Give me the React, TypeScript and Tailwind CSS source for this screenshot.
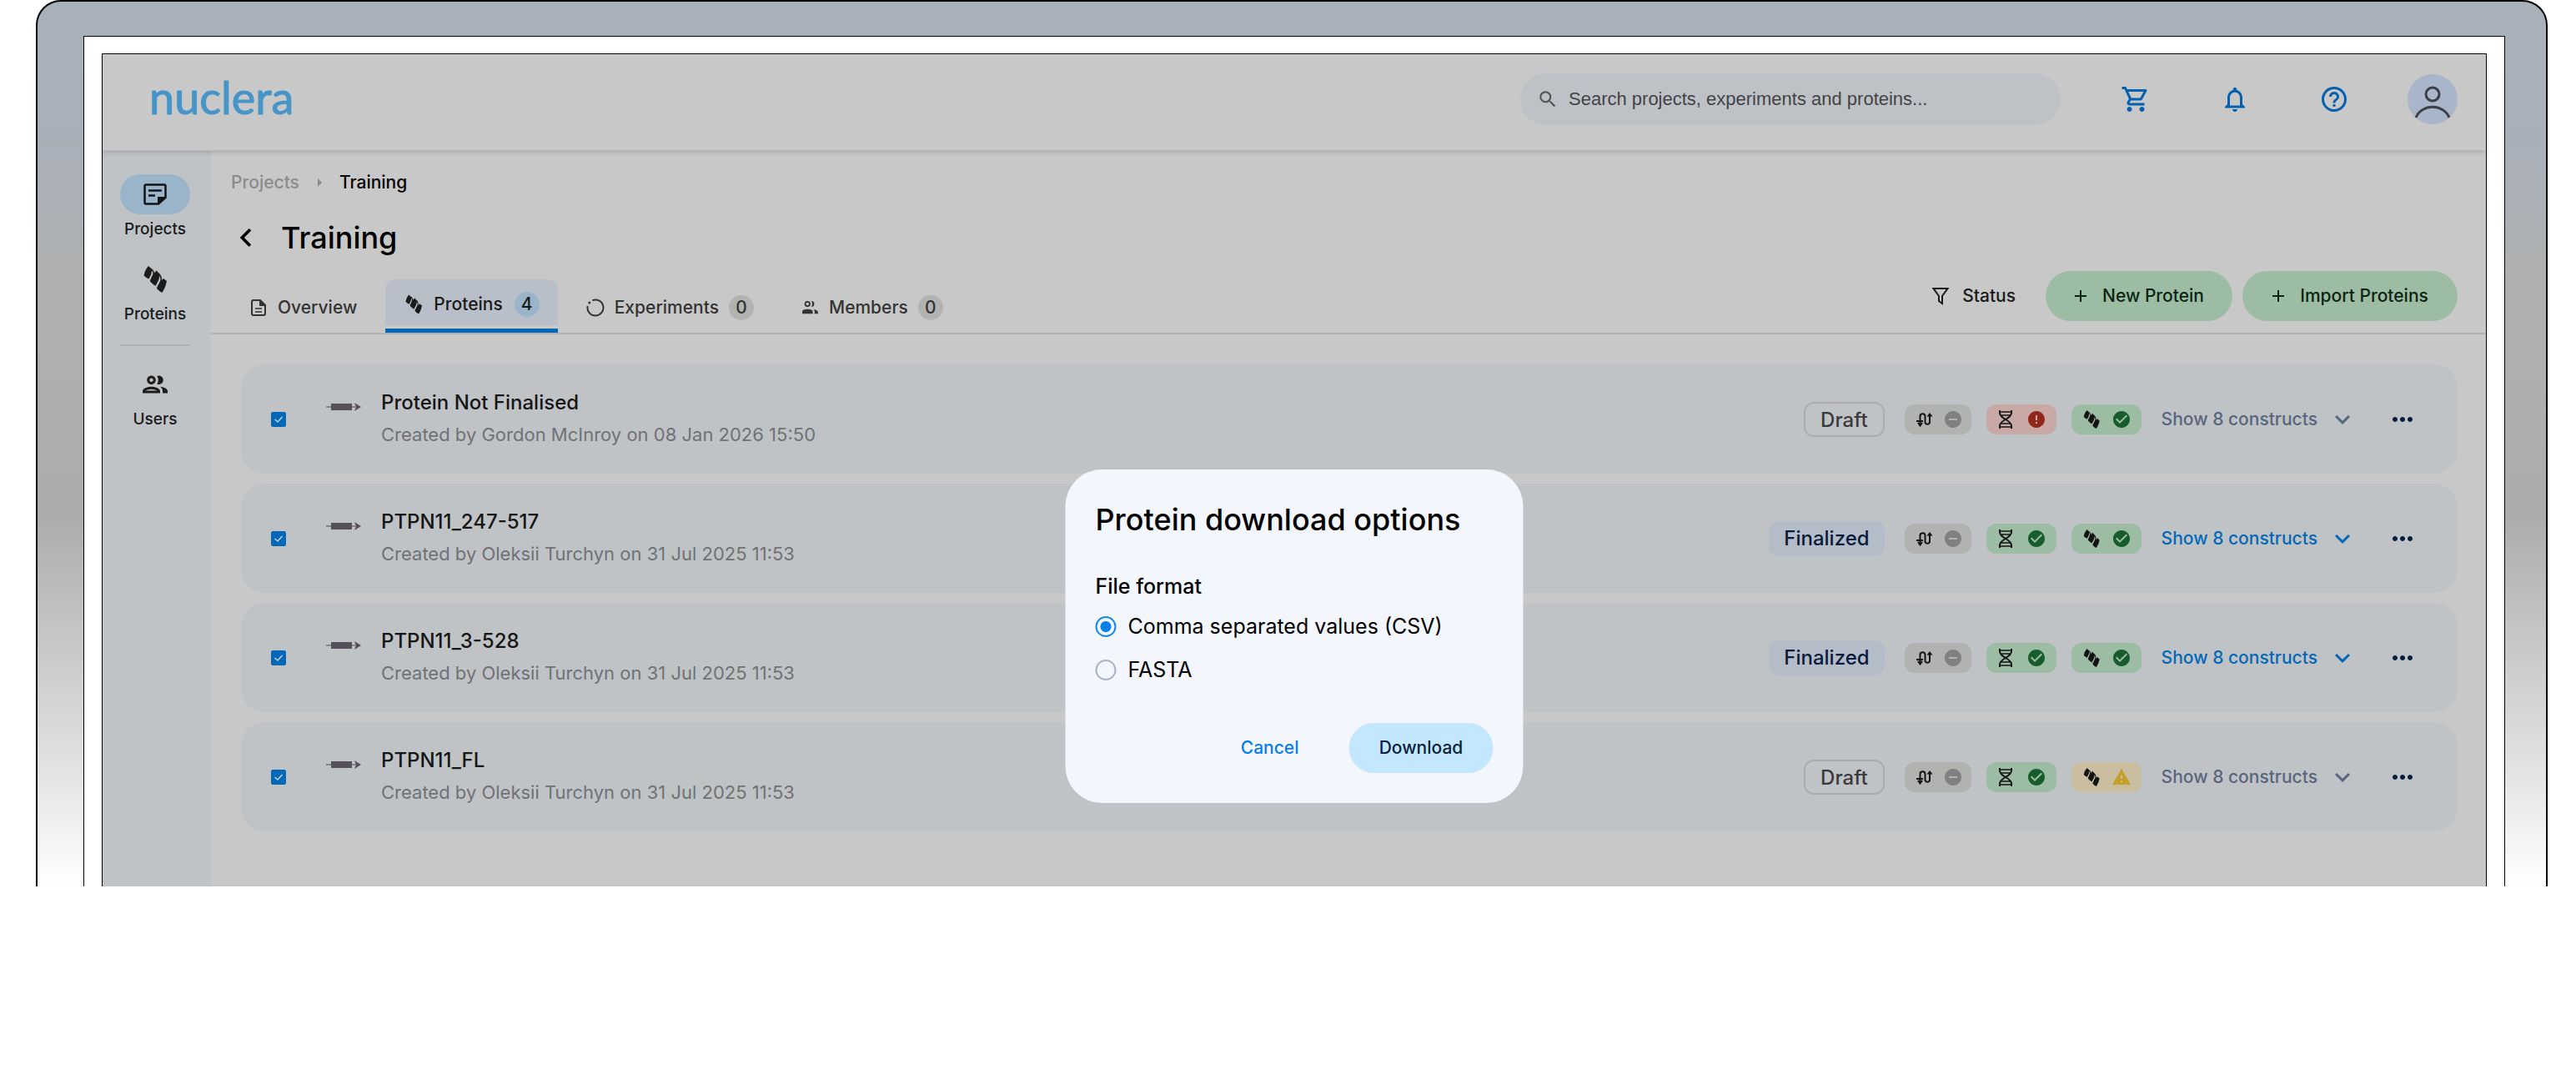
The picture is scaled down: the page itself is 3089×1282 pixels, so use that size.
import React, { useState } from "react";
import {
  MdChevronLeft,
  MdHelpOutline,
  MdKeyboardArrowDown,
  MdOutlineGroup,
  MdOutlineNotifications,
  MdOutlineShoppingCart,
  MdSearch,
  MdArrowRight,
  MdCheckCircle,
  MdError,
  MdRemoveCircle,
  MdWarning,
  MdAdd,
  MdMoreHoriz,
} from "react-icons/md";

type State = "none" | "ok" | "error" | "warning";

type Protein = {
  id: number;
  title: string;
  author: string;
  date: string;
  finalized: boolean;
  dna: State;
  protein: State;
};

const proteins: Protein[] = [
  {
    id: 1,
    title: "Protein Not Finalised",
    author: "Gordon McInroy",
    date: "08 Jan 2026 15:50",
    finalized: false,
    dna: "error",
    protein: "ok",
  },
  {
    id: 2,
    title: "PTPN11_247-517",
    author: "Oleksii Turchyn",
    date: "31 Jul 2025 11:53",
    finalized: true,
    dna: "ok",
    protein: "ok",
  },
  {
    id: 3,
    title: "PTPN11_3-528",
    author: "Oleksii Turchyn",
    date: "31 Jul 2025 11:53",
    finalized: true,
    dna: "ok",
    protein: "ok",
  },
  {
    id: 4,
    title: "PTPN11_FL",
    author: "Oleksii Turchyn",
    date: "31 Jul 2025 11:53",
    finalized: false,
    dna: "ok",
    protein: "warning",
  },
];

const stateStyles: Record<State, string> = {
  none: "w-20 pr-2.5 bg-[#b1b3b0]",
  ok: "w-21 pr-3 bg-[#9cbca4]",
  error: "w-21 pr-3 bg-[#c9a9a6]",
  warning: "w-21 pr-3 bg-[#c9be9f]",
};

const HelixIcon = ({ className }: { className?: string }) => (
  <svg viewBox="0 0 28 32" className={className} fill="currentColor">
    <path d="M6 0 10.500 4Q10 10 6.500 15.500L3.500 14 .5 11.500Q1.500 5 6 0Z" />
    <path d="M15.500 5.500 20 10Q19 17 14.500 24L11 21.500 8 18.500Q10 11 15.500 5.500Z" />
    <path d="M24 15 28 18Q27 25 22.500 32L19 30 16 27Q18 20 24 15Z" />
    <path
      d="M10 4Q13.500 8 11.500 12T8.500 18M19 10Q22.500 14 20.500 19T17 26.500"
      fill="none"
      stroke="currentColor"
      strokeWidth="1.500"
    />
  </svg>
);

const NoteIcon = () => (
  <svg viewBox="0 0 28 26" className="w-7 h-[26px]" fill="none" stroke="#141414">
    <path
      d="M3 1.5H25A1.5 1.5 0 0 1 26.500 3V17L18 24.500H3A1.500 1.500 0 0 1 1.500 23V3A1.500 1.500 0 0 1 3 1.500Z"
      strokeWidth="2.500"
    />
    <path d="M6 8.500H22M6 14.500H14" strokeWidth="2.500" />
    <path d="M17 25V16H27Z" fill="#141414" stroke="none" />
  </svg>
);

const DocIcon = () => (
  <svg viewBox="0 0 18 20" className="w-[18px] h-5" fill="none" stroke="#333">
    <path d="M3 1H11L17 7V17A2 2 0 0 1 15 19H3A2 2 0 0 1 1 17V3A2 2 0 0 1 3 1Z" strokeWidth="2" />
    <path d="M10.500 1V7.500H17Z" fill="#333" />
    <path d="M5 11H13M5 15H13" strokeWidth="1.500" />
  </svg>
);

const PlasmidIcon = () => (
  <svg viewBox="0 0 22 22" className="w-[22px] h-[22px]" fill="none" stroke="#333" strokeWidth="2">
    <path d="M7.500 2.200A9.500 9.500 0 1 1 1.700 9" />
    <circle cx="3.800" cy="5" r="1.500" fill="#333" stroke="none" />
  </svg>
);

const MembersIcon = () => (
  <svg viewBox="0 0 24 20" className="w-[22px] h-[18px]" fill="#333">
    <circle cx="9" cy="5" r="3" fill="none" stroke="#333" strokeWidth="2" />
    <path d="M14 1A4 4 0 0 1 14 9A7 7 0 0 0 14 1Z" />
    <path d="M2 18V15.500Q2 12 9 12T16 15.500V18Z" />
    <path d="M17 12.500Q23 13 23 16V18H18.500V15.500Q18.500 13.500 17 12.500Z" />
  </svg>
);

const FunnelIcon = () => (
  <svg viewBox="0 0 20 22" className="w-5 h-[22px]" fill="none" stroke="#1a1a1a" strokeWidth="2">
    <path d="M1.500 2H18.500L12 11V20L8 17V11Z" />
  </svg>
);

const ConstructIcon = () => (
  <svg viewBox="0 0 42 10" className="w-[42px] h-[10px]" fill="#555059">
    <path d="M0 4H6V6H0Z" fill="#85858a" />
    <path d="M6 1H31V9H6Z" />
    <path d="M31 4H36V6H31Z" fill="#85858a" />
    <path d="M34 0 42 5 34 10 36 5Z" />
  </svg>
);

const PathIcon = () => (
  <svg viewBox="0 0 20 18" className="w-5 h-[18px]" fill="none" stroke="#141414" strokeWidth="2">
    <path d="M4.500 15V5.500A3 3 0 0 1 10.500 5V13A3 3 0 0 0 16 13V4" />
    <path d="M0 11H8M2 13 4.500 16.500 7 13" />
    <path d="M12.500 5.500 16 1 19.500 5.500Z" fill="#141414" strokeWidth="0" />
  </svg>
);

const DnaIcon = () => (
  <svg viewBox="0 0 18 22" className="w-[18px] h-[22px]" fill="none" stroke="#141414" strokeWidth="2">
    <path d="M2 0V3C2 11 16 11 16 19V22M16 0V3C16 11 2 11 2 19V22" />
    <path d="M3 2H15M4 6H14M4 16H14M3 20H15" strokeWidth="1.500" />
  </svg>
);

const StateIcon = ({ state }: { state: State }) => {
  if (state === "ok") return <MdCheckCircle className="size-6 text-[#175c2c]" />;
  if (state === "error") return <MdError className="size-6 text-[#92281c]" />;
  if (state === "warning") return <MdWarning className="size-6 text-[#c79e26]" />;
  return <MdRemoveCircle className="size-6 text-[#7f8180]" />;
};

const StateBadge = ({ state, children }: { state: State; children: React.ReactNode }) => (
  <div className={`flex items-center justify-between h-9 pl-3.5 rounded-xl ${stateStyles[state]}`}>
    {children}
    <StateIcon state={state} />
  </div>
);

const Header = () => (
  <header className="relative flex items-center h-[116px] pl-14 pr-[34px] pb-2 border-b border-[#b8b8b8] shadow-[0_2px_5px_rgba(0,0,0,0.14)]">
    <a
      href="#"
      className="mb-1 font-['Lato',sans-serif] text-[54px] leading-none text-[#4794c8] [-webkit-text-stroke:1px_#4794c8]"
    >
      nuclera
    </a>
    <label className="flex items-center gap-3 ml-auto w-[648px] h-[62px] px-5 rounded-full bg-[#bec2c7]">
      <MdSearch className="size-[26px] text-[#555]" />
      <input
        type="text"
        aria-label="Search"
        placeholder="Search projects, experiments and proteins..."
        className="grow bg-transparent outline-none font-['Liberation_Sans',sans-serif] text-[22px] placeholder:text-[#444]"
      />
    </label>
    <div className="flex items-center gap-[83px] ml-[72px] text-[#0660b0]">
      <button aria-label="Cart">
        <MdOutlineShoppingCart className="size-9" />
      </button>
      <button aria-label="Notifications">
        <MdOutlineNotifications className="size-9" />
      </button>
      <button aria-label="Help">
        <MdHelpOutline className="size-9" />
      </button>
    </div>
    <button aria-label="Account" className="ml-[70px] size-15 rounded-full bg-[#a9b5ca] overflow-hidden">
      <svg viewBox="0 0 60 60" fill="none" stroke="#3c3f46" strokeWidth="3">
        <circle cx="30" cy="24" r="8" />
        <path d="M10 52C17 35 43 35 50 52" />
      </svg>
    </button>
  </header>
);

const Sidebar = () => (
  <nav className="flex flex-col items-center w-[130px] shrink-0 pt-7 pr-1 bg-[#bfc3c6] text-[19px] leading-6 font-medium text-[#1c1c1c]">
    <a href="#" className="flex flex-col items-center gap-1.5">
      <span className="flex items-center justify-center w-21 h-12 rounded-full bg-[#9ab5c9]">
        <NoteIcon />
      </span>
      Projects
    </a>
    <a href="#" className="flex flex-col items-center gap-3.5 mt-8">
      <HelixIcon className="w-7 h-8" />
      Proteins
    </a>
    <div className="w-21 h-0.5 mt-6 bg-[#b1b1b1]" />
    <a href="#" className="flex flex-col items-center gap-3 mt-7">
      <MdOutlineGroup className="size-9" />
      Users
    </a>
  </nav>
);

const ProteinRow = ({ item }: { item: Protein }) => {
  const [checked, setChecked] = useState(true);

  return (
    <li className="flex items-center h-[131px] pl-9 pr-12 rounded-[28px] bg-[#bfc3c6]">
      <span className="relative flex size-[18px]">
        <input
          type="checkbox"
          aria-label={item.title}
          checked={checked}
          onChange={() => setChecked(!checked)}
          className="appearance-none size-[18px] rounded-[2px] border border-[#0468b8] checked:bg-[#0468b8]"
        />
        {checked && (
          <svg
            viewBox="0 0 18 18"
            className="absolute inset-0 pointer-events-none"
            fill="none"
            stroke="#c0d4e4"
            strokeWidth="1.500"
          >
            <path d="M4.500 9 8 12 13.500 6" />
          </svg>
        )}
      </span>
      <div className="ml-12 mb-[30px]">
        <ConstructIcon />
      </div>
      <div className="ml-6 mb-1">
        <h2 className="text-[24px] leading-7 font-medium text-[#161616]">{item.title}</h2>
        <p className="mt-3 text-[22px] leading-6 text-[#707274]">
          Created by {item.author} on {item.date}
        </p>
      </div>
      <div className="flex items-center ml-auto">
        {item.finalized ? (
          <span className="px-[18px] h-[42px] leading-[42px] rounded-xl bg-[#b4bcc8] text-[24px] font-medium text-[#0a1a3c]">
            Finalized
          </span>
        ) : (
          <span className="px-[18px] h-[42px] leading-[40px] rounded-xl border-2 border-[#adadad] text-[24px] font-medium text-[#3a3a3a]">
            Draft
          </span>
        )}
        <div className="flex gap-[18px] ml-6">
          <StateBadge state="none">
            <PathIcon />
          </StateBadge>
          <StateBadge state={item.dna}>
            <DnaIcon />
          </StateBadge>
          <StateBadge state={item.protein}>
            <HelixIcon className="w-5 h-[22px] text-[#141414]" />
          </StateBadge>
        </div>
        <button
          className={
            item.finalized
              ? "flex items-center gap-3 ml-6 text-[21px] font-medium text-[#0468b8]"
              : "flex items-center gap-3 ml-6 text-[21px] font-medium text-[#59657c]"
          }
        >
          Show 8 constructs
          <MdKeyboardArrowDown className="size-9" />
        </button>
        <button aria-label="More" className="ml-9 text-[#071b40]">
          <MdMoreHoriz className="size-9" />
        </button>
      </div>
    </li>
  );
};

const Tabs = () => (
  <div className="flex items-end text-[21px] font-medium text-[#333]">
    <a href="#" className="flex items-center gap-3.5 h-15 pl-12 pr-[34px]">
      <DocIcon />
      Overview
    </a>
    <a
      href="#"
      className="flex items-center gap-3.5 h-16 pl-6 pr-[22px] rounded-t-xl border-b-5 border-[#0468b8] bg-[#b9bfc8] shadow-[inset_0_-4px_#c8c8c8] text-[#1a1a1a]"
    >
      <HelixIcon className="w-5 h-6" />
      Proteins
      <span className="size-[30px] leading-[30px] rounded-full bg-[#9ab5c9] text-center">4</span>
    </a>
    <a href="#" className="flex items-center gap-3 h-15 pl-[34px]">
      <PlasmidIcon />
      Experiments
      <span className="size-[30px] leading-[30px] rounded-full bg-[#b1b3b0] text-center">0</span>
    </a>
    <a href="#" className="flex items-center gap-3 h-15 pl-14">
      <MembersIcon />
      Members
      <span className="size-[30px] leading-[30px] rounded-full bg-[#b1b3b0] text-center">0</span>
    </a>
  </div>
);

const DownloadDialog = () => {
  const [format, setFormat] = useState("csv");

  const radioClass =
    "appearance-none size-[25px] rounded-full border-2 border-[#a9b4c6] checked:border-[#1787e6] checked:bg-[radial-gradient(circle,#0680e6_0_6px,transparent_7px)]";

  return (
    <div
      role="dialog"
      aria-label="Protein download options"
      className="absolute left-1/2 top-[498px] -translate-x-1/2 w-[549px] h-[400px] px-9 pt-9 rounded-[44px] bg-[#f3f6fd]"
    >
      <h2 className="text-[36px] leading-12 font-medium text-black">Protein download options</h2>
      <fieldset className="mt-10 text-[25px] leading-8">
        <legend className="font-medium">File format</legend>
        <label className="flex items-center gap-3.5 mt-4">
          <input
            type="radio"
            name="format"
            checked={format === "csv"}
            onChange={() => setFormat("csv")}
            className={radioClass}
          />
          Comma separated values (CSV)
        </label>
        <label className="flex items-center gap-3.5 mt-5">
          <input
            type="radio"
            name="format"
            checked={format === "fasta"}
            onChange={() => setFormat("fasta")}
            className={radioClass}
          />
          FASTA
        </label>
      </fieldset>
      <div className="flex justify-end mt-12 text-[21px] font-medium">
        <button className="h-15 px-9 mr-6 text-[#0680e6]">Cancel</button>
        <button className="h-15 w-[173px] rounded-full bg-[#c2e7ff] text-[#0a1f38]">Download</button>
      </div>
    </div>
  );
};

export default function App() {
  return (
    <div className="min-h-screen bg-white font-['Inter',sans-serif]">
      <div className="ml-[43px] mr-[34px] pl-[55px] pr-[49px] pt-[41px] rounded-t-[30px] border-2 border-b-0 border-black bg-[linear-gradient(#a8b1b9,#a8afba_15%,#aeb0b0_30%,#acacac_58%,#dfdfdf_85%,#fff)]">
        <div className="px-[21px] pt-5 border border-b-0 border-black bg-white">
          <div className="relative border border-b-0 border-black bg-[#c8c8c8]">
            <Header />
            <div className="flex">
              <Sidebar />
              <main className="grow min-h-[882px]">
                <div className="flex items-center pl-6 pt-6 text-[21px] leading-7 font-medium">
                  <a href="#" className="text-[#8b8b8b]">
                    Projects
                  </a>
                  <MdArrowRight className="size-6 mx-3 text-[#8b8b8b]" />
                  <span className="text-black">Training</span>
                </div>
                <div className="flex items-center gap-5 mt-7 pl-5">
                  <button aria-label="Back">
                    <MdChevronLeft className="size-11" />
                  </button>
                  <h1 className="text-[36px] leading-12 font-medium text-black">Training</h1>
                </div>
                <div className="flex items-end justify-between pr-[34px] border-b-2 border-[#b3b3b3]">
                  <Tabs />
                  <div className="flex items-center gap-3 mt-4 mb-3.5 text-[21px] font-medium text-[#1a1a1a]">
                    <button className="flex items-center gap-4 mr-6">
                      <FunnelIcon />
                      Status
                    </button>
                    <button className="flex items-center justify-center gap-3.5 w-[224px] pr-1 h-15 rounded-full bg-[#9cbca4] text-[#0b2412]">
                      <MdAdd className="size-6" />
                      New Protein
                    </button>
                    <button className="flex items-center justify-center gap-3.5 w-[258px] pr-1 h-15 rounded-full bg-[#9cbca4] text-[#0b2412]">
                      <MdAdd className="size-6" />
                      Import Proteins
                    </button>
                  </div>
                </div>
                <ul className="flex flex-col gap-3 pl-9 pr-[34px] pt-9">
                  {proteins.map((item) => (
                    <ProteinRow key={item.id} item={item} />
                  ))}
                </ul>
              </main>
            </div>
            <DownloadDialog />
          </div>
        </div>
      </div>
    </div>
  );
}
